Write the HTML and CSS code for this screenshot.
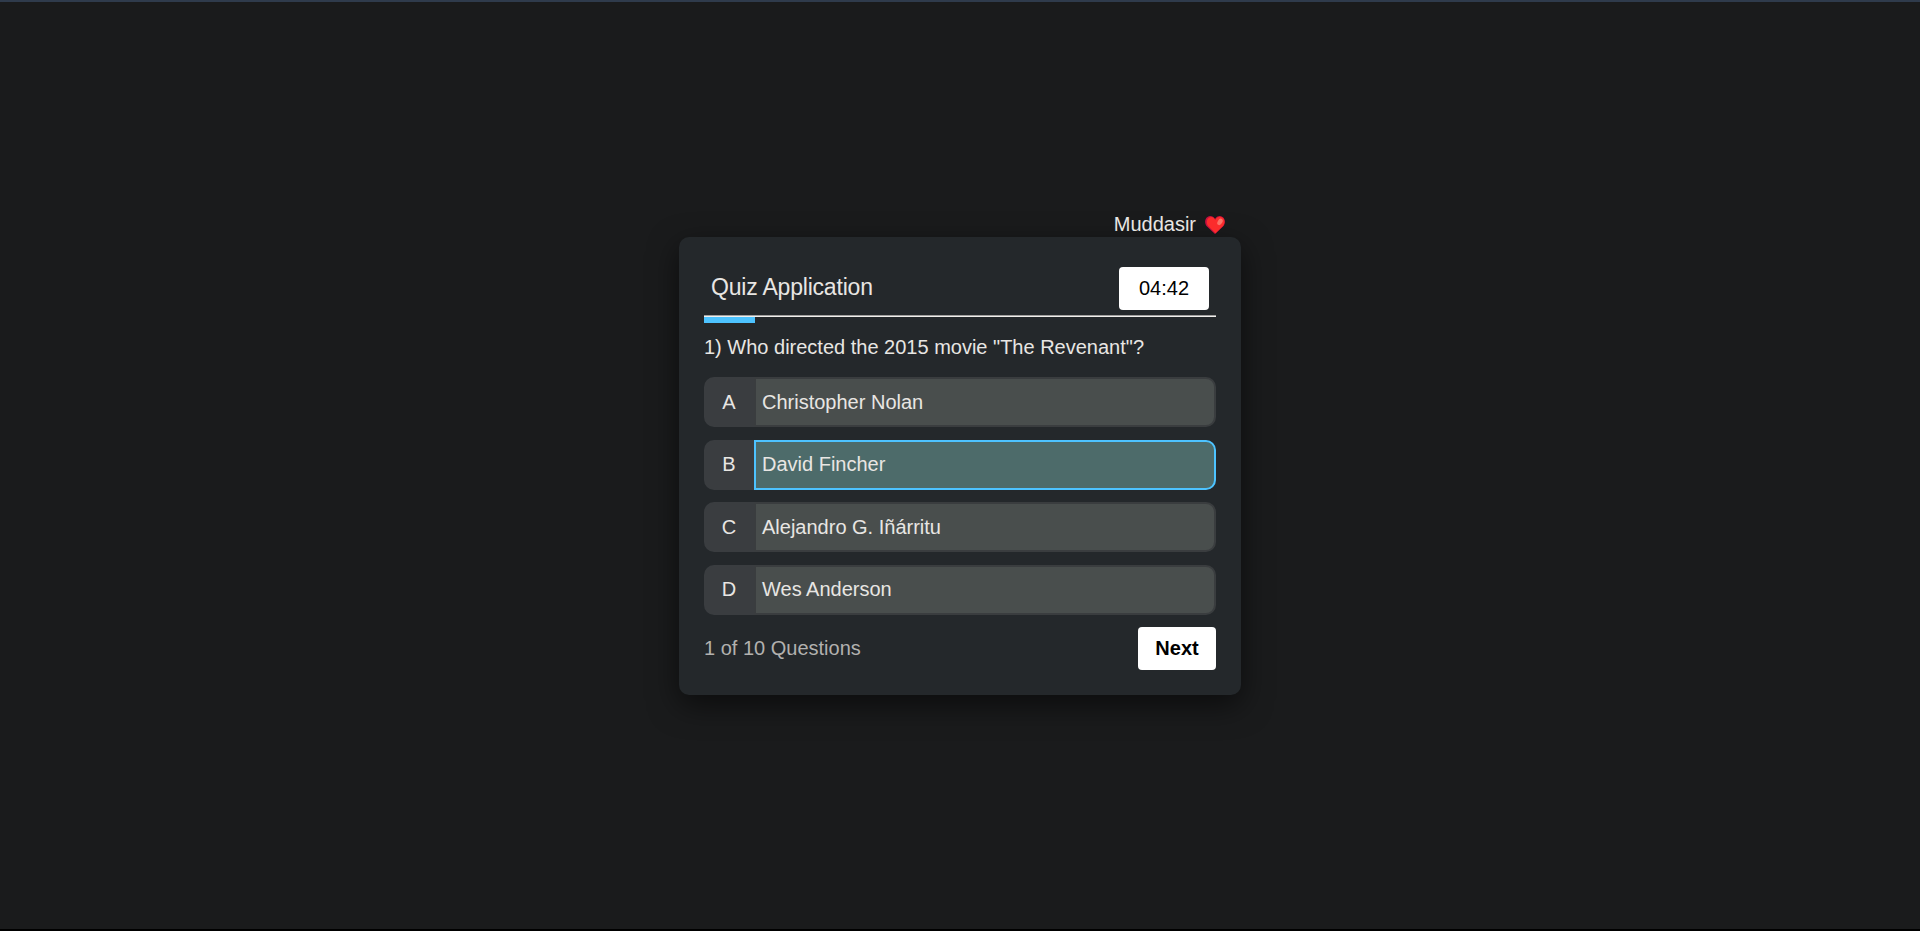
FILE: index.html
```html
<!DOCTYPE html>
<html lang="en">
<head>
<meta charset="utf-8">
<title>Quiz Application</title>
<link rel="stylesheet" href="styles.css">
</head>
<body>
<main class="page">
  <div class="quiz">
    <div class="author">
      <span>Muddasir</span>
      <svg class="heart" viewBox="0 0 20 18" aria-hidden="true">
        <path fill="#c7103f" d="M10 18 2 10.6C-.8 7.5-.3 2.600 2.500.9 5.300-.8 8.400.200 10 3c1.600-2.800 4.700-3.800 7.500-2.100 2.800 1.700 3.300 6.600.5 9.700z"/>
        <path fill="#fb2c2c" d="M10.500 17.300 3.400 10.300C1 7.500 1.400 3.300 3.900 1.700 6.400.300 9 1.200 10.300 4c1.500-2.900 4.400-3.900 7-2.500 2.600 1.600 3 6 .400 8.800z"/>
        <ellipse cx="15" cy="5.900" rx="2.300" ry="3.500" fill="#fb7468" transform="rotate(32 15 5.900)"/>
      </svg>
    </div>
    <section class="card">
      <header class="card-header">
        <h1 class="title">Quiz Application</h1>
        <div class="timer">04:42</div>
      </header>
      <div class="progress"><div class="progress-fill" style="width: 10%"></div></div>
      <p class="question">1) Who directed the 2015 movie "The Revenant"?</p>
      <div class="options">
        <div class="option"><span class="letter">A</span><span class="answer">Christopher Nolan</span></div>
        <div class="option"><span class="letter">B</span><span class="answer selected">David Fincher</span></div>
        <div class="option"><span class="letter">C</span><span class="answer">Alejandro G. Iñárritu</span></div>
        <div class="option"><span class="letter">D</span><span class="answer">Wes Anderson</span></div>
      </div>
      <footer class="card-footer">
        <span class="count">1 of 10 Questions</span>
        <button class="next">Next</button>
      </footer>
    </section>
  </div>
</main>
</body>
</html>
```
FILE: styles.css
```css
* { box-sizing: border-box; }

body {
  margin: 0;
  background: #1a1b1c;
  color: #e8e6e3;
  font: 20px/23px "Liberation Sans", Arial, sans-serif;
}

.page {
  height: 931px;
  padding-top: 211px;
  border-top: 2px solid #2f3b4c;
  border-bottom: 2px solid #000;
  display: flex;
  justify-content: center;
  align-items: flex-start;
}

.quiz { width: 562px; }

.author {
  height: 24px;
  padding-right: 16px;
  display: flex;
  justify-content: flex-end;
  gap: 9px;
}

.heart {
  width: 20px;
  height: 18px;
  margin-top: 3px;
}

.card {
  height: 458px;
  padding: 25px;
  border-radius: 10px;
  background: #24282b;
  box-shadow: 0 10px 30px rgba(0, 0, 0, 0.55);
}

.card-header {
  height: 55px;
  padding: 5px 7px;
  border-bottom: 1px solid #f0efed;
  box-shadow: inset 0 -1px #a09f9e;
  display: flex;
  justify-content: space-between;
}

.title {
  margin: 7px 0 0;
  font-size: 23px;
  font-weight: 400;
  letter-spacing: -0.2px;
  line-height: 27px;
}

.timer {
  width: 90px;
  height: 43px;
  border-radius: 4px;
  background: #fff;
  color: #000;
  line-height: 43px;
  text-align: center;
}

.progress { height: 6px; }

.progress-fill {
  height: 6px;
  background: #4dc3ff;
}

.question { margin: 13px 0 18px; }

.options {
  display: grid;
  gap: 12.5px;
}

.option {
  height: 50px;
  line-height: 46px;
  display: flex;
}

.option:nth-child(even) { line-height: 44px; }

.letter {
  width: 50px;
  padding: 2px 0;
  border-radius: 10px 0 0 10px;
  background: #3a3d40;
  text-align: center;
}

.answer {
  flex: 1;
  padding-left: 6px;
  border: 2px solid #3a3d3f;
  border-radius: 0 10px 10px 0;
  background: #494e4d;
}

.selected {
  border-color: #4dc3ff;
  background: #4d6b6a;
}

.card-footer {
  margin-top: 12.5px;
  display: flex;
  justify-content: space-between;
  align-items: center;
}

.count { color: #b2b1af; }

.next {
  width: 78px;
  height: 43px;
  padding: 0;
  border: 0;
  border-radius: 4px;
  background: #fff;
  color: #000;
  font: bold 20px "Liberation Sans", Arial, sans-serif;
}
```
